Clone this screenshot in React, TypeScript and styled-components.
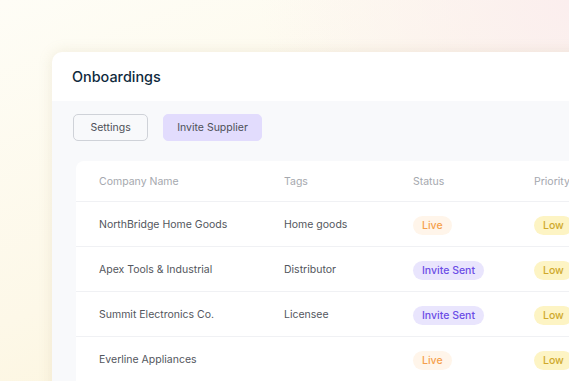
import styled, { createGlobalStyle } from 'styled-components';

const GlobalStyle = createGlobalStyle`
	html, body {
		margin: 0;
		padding: 0;
	}
	body {
		font-family: Inter, "Open Sans", sans-serif;
	}
`;

const Page = styled.div`
	width: 569px;
	height: 381px;
	overflow: hidden;
	box-sizing: border-box;
	padding: 52px 0 0 52px;
	background:
		radial-gradient(circle at 100% 0%, #fbeeee 0%, rgba(251, 238, 238, 0) 45%),
		linear-gradient(160deg, #fefdf6 0%, #fdf8e8 55%, #fcf3d6 100%);
`;

const Card = styled.div`
	width: 620px;
	height: 400px;
	background: #ffffff;
	border-radius: 10px 0 0 0;
	box-shadow: 0 0 14px rgba(180, 160, 110, 0.18);
	display: flex;
	flex-direction: column;
	overflow: hidden;
`;

const CardHeader = styled.div`
	height: 49px;
	display: flex;
	align-items: center;
	padding-left: 20px;
	flex-shrink: 0;
`;

const Title = styled.h1`
	margin: 0;
	font-size: 14.4px;
	font-weight: 500;
	color: #0f2a3d;
`;

const CardBody = styled.div`
	flex: 1;
	background: #f8f9fb;
	padding: 13px 0 0 21px;
`;

const Toolbar = styled.div`
	display: flex;
	gap: 15px;
`;

const Button = styled.button<{ $primary?: boolean }>`
	height: 27px;
	padding: ${(p) => (p.$primary ? '0 13px' : '0 16.5px')};
	border-radius: 5px;
	font-family: inherit;
	font-size: 10.5px;
	color: #4d5058;
	background: ${(p) => (p.$primary ? '#e2dcfd' : '#f8f9fb')};
	border: 1px solid ${(p) => (p.$primary ? '#e2dcfd' : '#cfd2d8')};
	cursor: pointer;
`;

const Table = styled.div`
	margin: 20px 0 0 3px;
	background: #ffffff;
	border-radius: 8px 0 0 0;
	display: flex;
	flex-direction: column;
`;

const Row = styled.div<{ $head?: boolean }>`
	display: grid;
	grid-template-columns: 185px 129px 121px 1fr;
	align-items: center;
	padding-left: 23px;
	height: ${(p) => (p.$head ? '40px' : '45px')};
	border-top: ${(p) => (p.$head ? 'none' : '1px solid #f0f1f4')};
	box-sizing: border-box;
`;

const HeadCell = styled.div`
	font-size: 10.5px;
	color: #a5a8ae;
	white-space: nowrap;
`;

const Cell = styled.div`
	font-size: 10.5px;
	color: #53565d;
`;

type Tone = 'live' | 'invite' | 'low';

const tones: Record<Tone, { bg: string; fg: string }> = {
	live: { bg: '#fff5ea', fg: '#f5a04c' },
	invite: { bg: '#e9e5fd', fg: '#6b4ce6' },
	low: { bg: '#fdf4c4', fg: '#cfa92c' },
};

const Pill = styled.span<{ $tone: Tone }>`
	display: inline-flex;
	align-items: center;
	height: 19px;
	padding: 0 9px;
	border-radius: 10px;
	font-size: 10.5px;
	font-weight: 500;
	background: ${(p) => tones[p.$tone].bg};
	color: ${(p) => tones[p.$tone].fg};
`;

const rows: { name: string; tag: string; status: Tone; statusText: string }[] = [
	{ name: 'NorthBridge Home Goods', tag: 'Home goods', status: 'live', statusText: 'Live' },
	{ name: 'Apex Tools & Industrial', tag: 'Distributor', status: 'invite', statusText: 'Invite Sent' },
	{ name: 'Summit Electronics Co.', tag: 'Licensee', status: 'invite', statusText: 'Invite Sent' },
	{ name: 'Everline Appliances', tag: '', status: 'live', statusText: 'Live' },
];

const App = () => {
	return (
		<Page>
			<GlobalStyle />
			<Card>
				<CardHeader>
					<Title>Onboardings</Title>
				</CardHeader>
				<CardBody>
					<Toolbar>
						<Button>Settings</Button>
						<Button $primary>Invite Supplier</Button>
					</Toolbar>
					<Table>
						<Row $head>
							<HeadCell>Company Name</HeadCell>
							<HeadCell>Tags</HeadCell>
							<HeadCell>Status</HeadCell>
							<HeadCell>Priority</HeadCell>
						</Row>
						{rows.map((r) => (
							<Row key={r.name}>
								<Cell>{r.name}</Cell>
								<Cell>{r.tag}</Cell>
								<div>
									<Pill $tone={r.status}>{r.statusText}</Pill>
								</div>
								<div>
									<Pill $tone="low">Low</Pill>
								</div>
							</Row>
						))}
					</Table>
				</CardBody>
			</Card>
		</Page>
	);
};

export default App;
